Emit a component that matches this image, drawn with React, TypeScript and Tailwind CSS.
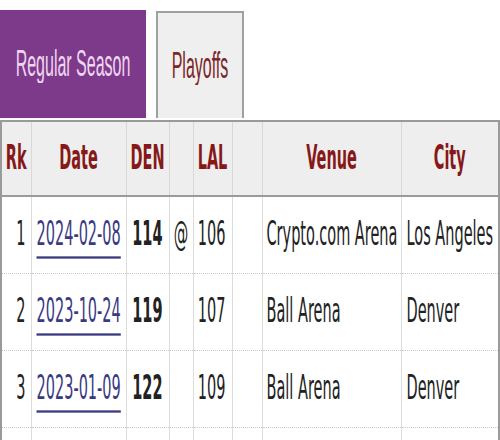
import React from 'react';

const games = [
  { rk: 1, date: '2024-02-08', den: 114, at: '@', lal: 106, venue: 'Crypto.com Arena', city: 'Los Angeles' },
  { rk: 2, date: '2023-10-24', den: 119, at: '', lal: 107, venue: 'Ball Arena', city: 'Denver' },
  { rk: 3, date: '2023-01-09', den: 122, at: '', lal: 109, venue: 'Ball Arena', city: 'Denver' },
];

// text in the shot is stretched tall, so each label is scaled on y
function T({ children, className = '' }: { children: React.ReactNode; className?: string }) {
  return <span className={`inline-block scale-y-[2.3] ${className}`}>{children}</span>;
}

const th = 'border-x border-[#d8d8d8] text-center font-bold text-[#861818] p-0';
const td = 'border-x border-[#dcdcdc] p-0';

export default function App() {
  return (
    <div className="w-[500px] h-[440px] overflow-hidden bg-white">
      <div className="flex items-end gap-[10px] h-[120px] pt-[10px] pb-[2px]">
        <div className="w-[146px] h-[108px] bg-[#7d3a8b] flex items-center justify-center text-[16px] text-[#f0d6f0] font-['Liberation_Sans',sans-serif]">
          <T>Regular Season</T>
        </div>
        <div className="w-[88px] h-[107px] bg-[#efefef] border-2 border-b-0 border-[#a0a0a0] flex items-center justify-center text-[16px] text-[#7c2626] font-['Liberation_Sans',sans-serif]">
          <T>Playoffs</T>
        </div>
      </div>

      <table className="w-[498px] table-fixed border-collapse border-x-2 border-[#9a9a9a] text-[14.5px] leading-[17px] font-['DejaVu_Sans',sans-serif] text-[#222]">
        <colgroup>
          <col className="w-[30px]" />
          <col className="w-[95px]" />
          <col className="w-[43px]" />
          <col className="w-[24px]" />
          <col className="w-[39px]" />
          <col className="w-[30px]" />
          <col className="w-[139px]" />
          <col className="w-[98px]" />
        </colgroup>
        <thead>
          <tr className="h-[75px] bg-[#eeeeee] border-y-2 border-[#9a9a9a]">
            <th className={th}><T>Rk</T></th>
            <th className={th}><T>Date</T></th>
            <th className={th}><T>DEN</T></th>
            <th className={th}></th>
            <th className={th}><T>LAL</T></th>
            <th className={th}></th>
            <th className={th}><T>Venue</T></th>
            <th className={th}><T>City</T></th>
          </tr>
        </thead>
        <tbody>
          {games.map((g) => (
            <tr key={g.rk} className="h-[77px] border-b border-dotted border-[#c8c8c8]">
              <td className={`${td} text-right pr-[5px]`}><T>{g.rk}</T></td>
              <td className={`${td} pl-[5px]`}>
                <T className="text-[#3a3a82] underline decoration-[1px] underline-offset-[5px]">{g.date}</T>
              </td>
              <td className={`${td} text-right pr-[6px] font-bold`}><T>{g.den}</T></td>
              <td className={`${td} text-center`}><T>{g.at}</T></td>
              <td className={`${td} text-right pr-[6px]`}><T>{g.lal}</T></td>
              <td className={td}></td>
              <td className={`${td} pl-[4px] whitespace-nowrap`}><T>{g.venue}</T></td>
              <td className={`${td} pl-[5px] whitespace-nowrap`}><T>{g.city}</T></td>
            </tr>
          ))}
          {/* next row starts just at the bottom edge */}
          <tr className="h-[77px]">
            {[0, 1, 2, 3, 4, 5, 6, 7].map((i) => (
              <td key={i} className={td}></td>
            ))}
          </tr>
        </tbody>
      </table>
    </div>
  );
}
